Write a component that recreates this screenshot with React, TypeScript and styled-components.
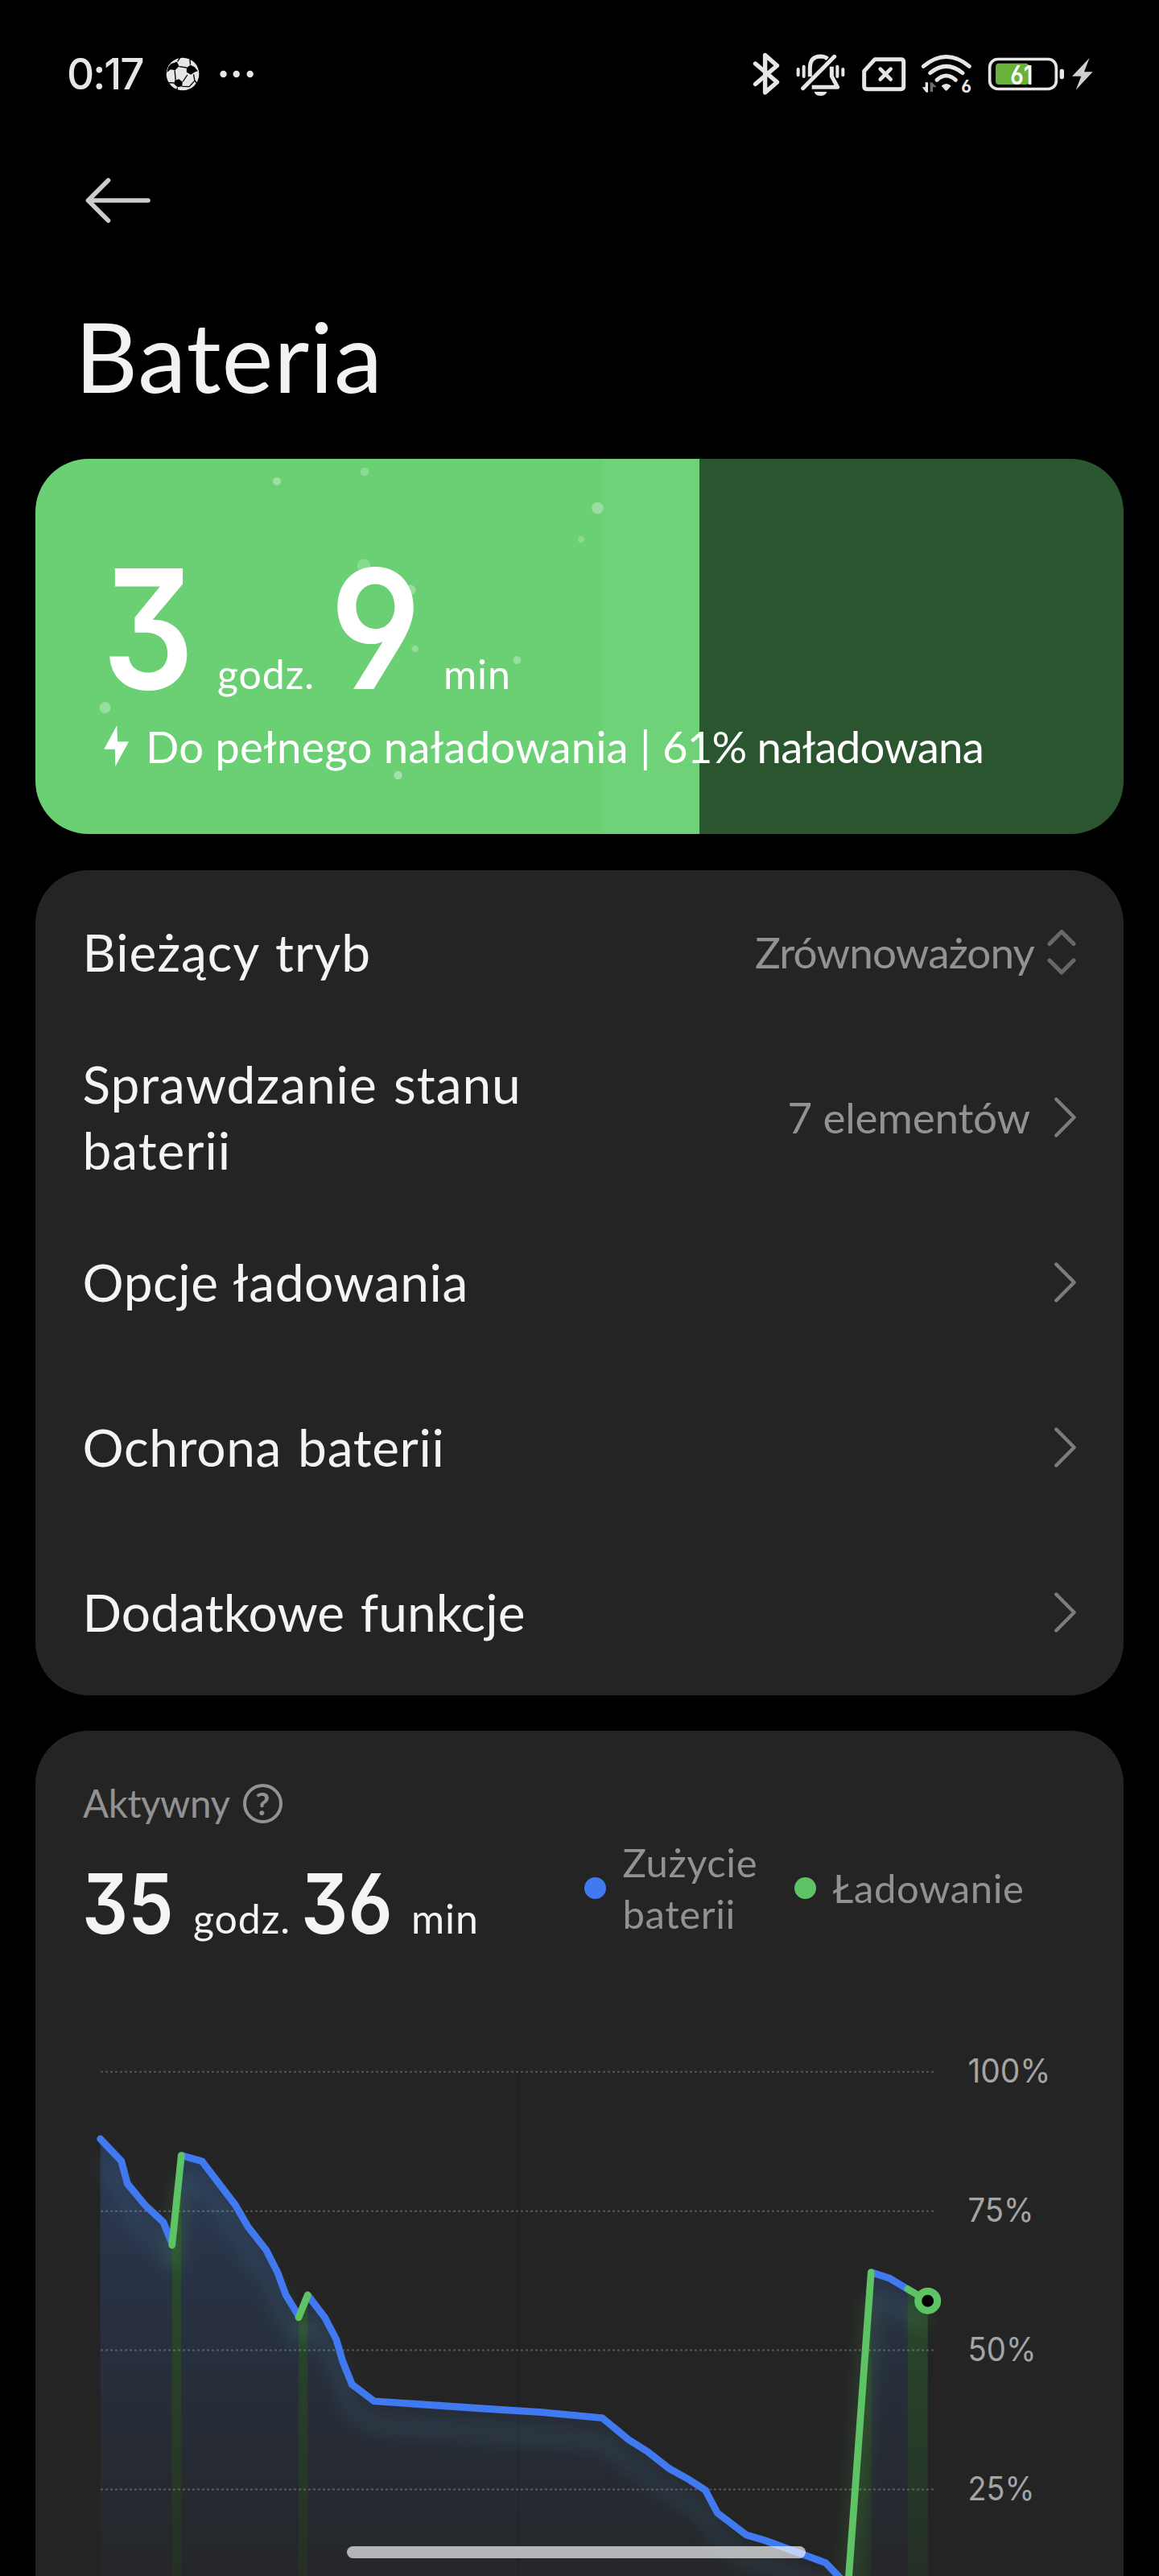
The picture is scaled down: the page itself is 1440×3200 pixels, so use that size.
import React from "react";
import styled, { createGlobalStyle } from "styled-components";

const GlobalStyle = createGlobalStyle`
  *, *::before, *::after { box-sizing: border-box; }
  html, body { margin: 0; padding: 0; background: #000; }
`;

const textFont = `Lato, "Noto Sans", sans-serif`;
const numberFont = `Inter, Roboto, sans-serif`;

const Screen = styled.main`
  position: relative;
  width: 1440px;
  height: 3200px;
  overflow: hidden;
  background: #000;
  color: #f4f4f4;
  font-family: ${textFont};
`;

/* ---------- status bar ---------- */

const StatusBar = styled.header`
  height: 184px;
  padding: 0 81px 0 83px;
  display: flex;
  align-items: center;
  justify-content: space-between;
`;

const StatusGroup = styled.div`
  display: flex;
  align-items: center;
`;

const Clock = styled.span`
  width: 122.5px;
  font-family: ${numberFont};
  font-size: 53px;
  line-height: 64px;
  font-weight: 500;
  letter-spacing: -2px;
  color: #e6e6e6;
`;

const StatusIcon = styled.svg<{ $gap?: number }>`
  display: block;
  flex: none;
  overflow: visible;
  margin-left: ${(p) => p.$gap ?? 0}px;
`;

const IconText = styled.text`
  font-family: ${numberFont};
  font-feature-settings: "ss01", "cv03";
`;

const ink = "#e6e6e6";

function BallIcon() {
  return (
    <StatusIcon width="42" height="42" viewBox="436.5 94 126 126">
      <circle cx="499.5" cy="157" r="61" fill={ink} />
      <g fill="#000">
        <path d="M456 119 L478 111 L486 128 L471 143 L454 140 L440 152 L446 131 Z" />
        <path d="M514 134 L528 123 L544 131 L556 146 L546 149 L530 159 L514 150 Z" />
        <path d="M470 181 L485 176 L499 186 L497 203 L480 206 L467 194 Z" />
      </g>
      <g fill="none" stroke="#000" strokeWidth="4">
        <path d="M486 129 L514 133 M470 143 L473 180 M500 185 L517 160 M480 110 L491 94 M528 122 L526 98 M540 158 L544 180 L552 192 M497 203 L524 204 L544 182 M438 189 L468 190 M480 207 L478 216" />
      </g>
    </StatusIcon>
  );
}

function MoreDots() {
  return (
    <StatusIcon $gap={25} width="44" height="12" viewBox="0 0 44 12">
      <g fill={ink}>
        <circle cx="4.5" cy="6" r="4.2" />
        <circle cx="20.7" cy="6" r="4.2" />
        <circle cx="37.7" cy="6" r="4.2" />
      </g>
    </StatusIcon>
  );
}

function BluetoothIcon() {
  return (
    <StatusIcon width="34" height="56" viewBox="935 64 34 56">
      <path
        d="M938.5 79 L965.5 102 L950.6 115 V68.5 L965.5 81.5 L938.5 104.5"
        fill="none"
        stroke={ink}
        strokeWidth="5.4"
        strokeLinecap="round"
        strokeLinejoin="round"
      />
    </StatusIcon>
  );
}

function MutedBellIcon() {
  return (
    <StatusIcon $gap={20} width="62" height="56" viewBox="267 72 186 168">
      <g fill="none" stroke={ink} strokeWidth="15" strokeLinecap="round">
        <path d="M293 209 L410 91" />
        <path d="M319 166 V131 Q320 91 358 90 Q374 90 385 99" strokeLinecap="butt" />
        <path d="M400 128 V164 L422 205 H326" strokeLinecap="butt" strokeLinejoin="round" />
      </g>
      <path d="M335 222 H382 Q378 237 358 237 Q339 237 335 222 Z" fill={ink} />
      <g stroke={ink} strokeWidth="12" strokeLinecap="round">
        <path d="M275 138 V160 M296 128 V165 M421 128 V165 M442 138 V160" />
      </g>
    </StatusIcon>
  );
}

function NoSimIcon() {
  return (
    <StatusIcon $gap={19} width="56" height="44" viewBox="510 96 168 132">
      <path
        d="M521 151 L561 107 H658 Q668 107 668 117 V208 Q668 218 658 218 H531 Q521 218 521 208 Z"
        fill="none"
        stroke={ink}
        strokeWidth="15"
        strokeLinejoin="round"
      />
      <path d="M581 143 L620 182 M620 143 L581 182" stroke={ink} strokeWidth="14" strokeLinecap="round" />
    </StatusIcon>
  );
}

function WifiIcon() {
  return (
    <StatusIcon $gap={18.3} width="64" height="50" viewBox="733 87 192 150">
      <g fill="none" stroke={ink} strokeWidth="15" strokeLinecap="round">
        <path d="M743 133 Q828 62 914 133" />
        <path d="M768 158 Q828 108 889 158" />
        <path d="M793 184 Q828 152 863 184" />
      </g>
      <path d="M810 206 Q828 190 846 206 L832 222 Q828 226 824 222 Z" fill={ink} />
      <path d="M750 193 H760 V230 H753 L738 211 H750 Z" fill={ink} />
      <path d="M768 228 V193 H775 L792 211 H778 V228 Z" fill="#6b6b6b" />
      <IconText x="884" y="231" fontSize="64" fontWeight="700" fill={ink} textLength="38" lengthAdjust="spacingAndGlyphs">
        6
      </IconText>
    </StatusIcon>
  );
}

function BatteryIcon() {
  return (
    <StatusIcon $gap={18.7} width="96" height="44" viewBox="981 90 288 132">
      <rect x="989" y="100.5" width="248" height="111" rx="30" fill="none" stroke={ink} strokeWidth="11" />
      <rect x="1011" y="116" width="124" height="79" rx="12" fill="#6ab13a" />
      <rect x="1250" y="137" width="16" height="38" rx="7" fill={ink} />
      <IconText x="1066" y="194" fontSize="98" fontWeight="600" fill="#fff" textLength="84" lengthAdjust="spacingAndGlyphs">
        61
      </IconText>
    </StatusIcon>
  );
}

function ChargeBolt() {
  return (
    <StatusIcon $gap={8} width="28" height="42" viewBox="1293 93 84 126">
      <path d="M1361 96 L1296 164 H1330 L1310 215 L1373 148 H1341 Z" fill="#cfcfcf" />
    </StatusIcon>
  );
}

/* ---------- page heading ---------- */

const NavBar = styled.nav`
  height: 129px;
  padding-left: 102px;
  display: flex;
  align-items: center;
`;

const Title = styled.h1`
  margin: 56px 0;
  padding-left: 93px;
  font-size: 121px;
  line-height: 145px;
  font-weight: 400;
  color: #f2f2f2;
  letter-spacing: 0.9px;
`;

/* ---------- cards ---------- */

const Stack = styled.div`
  display: flex;
  flex-direction: column;
  gap: 44.5px;
  padding: 0 44px;
`;

const Card = styled.section`
  border-radius: 66px;
  background: #242424;
  overflow: hidden;
`;

const ChargeCard = styled(Card)<{ $level: number }>`
  position: relative;
  height: 466px;
  padding: 111px 0 0 85px;
  color: #fff;
  background: linear-gradient(
    to right,
    #6bd073 0 705px,
    #70d278 705px ${(p) => p.$level}%,
    #2b552f ${(p) => p.$level}% 100%
  );
`;

const Bubbles = styled.svg`
  position: absolute;
  inset: 0;
`;

const TimeRow = styled.div<{ $height: number }>`
  position: relative;
  display: flex;
  align-items: baseline;
  height: ${(p) => p.$height}px;
  line-height: ${(p) => p.$height}px;
  margin-left: -2px;
`;

const Digits = styled.span<{ $size: number; $slot: number; $scale: number }>`
  flex: none;
  width: ${(p) => p.$slot}px;
  white-space: nowrap;
  font-family: ${numberFont};
  font-size: ${(p) => p.$size}px;
  font-weight: 600;
  font-feature-settings: "ss01", "cv09", "cv03", "cv04";
  transform: scaleX(${(p) => p.$scale});
  transform-origin: left center;
`;

const Unit = styled.span<{ $slot: number }>`
  flex: none;
  width: ${(p) => p.$slot}px;
  font-size: 50px;
  letter-spacing: 0.9px;
`;

const ChargeStatus = styled.p`
  position: relative;
  margin: 13px 0 0;
  display: flex;
  align-items: center;
  font-size: 54.5px;
  line-height: 66px;
  white-space: pre;
`;

const StatusPart = styled.span<{ $tracking: number }>`
  letter-spacing: ${(p) => p.$tracking}px;
`;

const StatusBolt = styled.svg`
  display: block;
  margin-right: 20px;
`;

/* ---------- settings list ---------- */

const Row = styled.div`
  height: 205px;
  padding: 0 58px 0 58.5px;
  display: flex;
  align-items: center;
  justify-content: space-between;
`;

const RowLabel = styled.span<{ $tracking: number }>`
  max-width: 620px;
  font-size: 64px;
  line-height: 82px;
  word-spacing: 3px;
  letter-spacing: ${(p) => p.$tracking}px;
`;

const RowEnd = styled.span<{ $gap: number; $tracking: number }>`
  display: flex;
  align-items: center;
  gap: ${(p) => p.$gap}px;
  font-size: 53px;
  line-height: 66px;
  letter-spacing: ${(p) => p.$tracking}px;
  color: #929292;
`;

function Chevron() {
  return (
    <svg width="28" height="52" viewBox="0 0 28 52">
      <path d="M2.3 3.5 L24.6 26 L2.3 48.5" fill="none" stroke="#7c7c7c" strokeWidth="4.4" strokeLinecap="round" strokeLinejoin="round" />
    </svg>
  );
}

function Selector() {
  return (
    <svg width="38" height="58" viewBox="0 0 38 58">
      <path
        d="M4 18.5 L19 3.5 L34 18.5 M4 39 L19 54 L34 39"
        fill="none"
        stroke="#686868"
        strokeWidth="5.2"
        strokeLinecap="round"
        strokeLinejoin="round"
      />
    </svg>
  );
}

const settings = [
  { label: "Bieżący tryb", value: "Zrównoważony", picker: true, tracking: 0.95, valueTracking: -0.85 },
  { label: "Sprawdzanie stanu baterii", value: "7 elementów", tracking: 0.97, valueTracking: -0.2 },
  { label: "Opcje ładowania", tracking: 0.57 },
  { label: "Ochrona baterii", tracking: 0.67 },
  { label: "Dodatkowe funkcje", tracking: 0.1 },
];

/* ---------- usage card ---------- */

const UsageCard = styled(Card)`
  height: 1120px;
`;

const UsageHeader = styled.div`
  height: 390px;
  padding: 0 60px;
  display: flex;
`;

const UsageSummary = styled.div`
  flex: 0 0 622px;
  padding-top: 60px;
`;

const ActiveLabel = styled.div`
  display: flex;
  align-items: center;
  gap: 16px;
  height: 60px;
  margin: 0 0 45px -1px;
  font-size: 47.5px;
  line-height: 60px;
  letter-spacing: -0.4px;
  color: #929292;
`;

const HelpBadge = styled.span`
  width: 49px;
  height: 49px;
  border: 4px solid #929292;
  border-radius: 50%;
  display: flex;
  align-items: center;
  justify-content: center;
  font-size: 39px;
  font-weight: 700;
  line-height: 1;
`;

const Legend = styled.div`
  display: flex;
  gap: 24px;
  padding-top: 131px;
`;

const LegendItem = styled.div`
  display: flex;
  align-items: center;
  gap: 20.5px;
  height: 128px;
`;

const LegendDot = styled.i<{ $color: string }>`
  flex: none;
  width: 27px;
  height: 27px;
  border-radius: 50%;
  background: ${(p) => p.$color};
`;

const LegendLabel = styled.span`
  width: 189.5px;
  font-size: 49px;
  line-height: 64px;
  letter-spacing: 0.6px;
  color: #929292;
`;

const ChartSvg = styled.svg`
  display: block;
`;

const AxisLabel = styled.text`
  font-family: ${numberFont};
  font-size: 41px;
  fill: #a5a5a5;
`;

const HomeIndicator = styled.div`
  position: absolute;
  left: 431px;
  bottom: 22px;
  width: 570px;
  height: 15px;
  border-radius: 8px;
  background: rgba(255, 255, 255, 0.66);
`;

type Point = [number, number];

const BLUE = "#4179f0";
const GREEN = "#5ec364";

const drains: Point[][] = [
  [[124.7, 2657], [150.7, 2684.4], [158.3, 2712.6], [180, 2739], [203, 2760.5], [213.7, 2787]],
  [[225.3, 2677.6], [251, 2684.8], [292.3, 2739], [308.3, 2766.4], [330.7, 2795], [345, 2823.2], [355, 2850.6], [371, 2877]],
  [
    [382.3, 2851], [403.7, 2879.2], [417.7, 2906], [426, 2934], [437.3, 2962], [464.7, 2982.8], [600, 2992],
    [673.3, 2996.7], [748.3, 3003.7], [781, 3030.7], [804, 3045], [831.7, 3066.7], [855.7, 3080], [876.3, 3093.3],
    [891.3, 3121.7], [927.3, 3149], [951.7, 3156.3], [1026, 3183.7], [1053, 3212],
  ],
  [[1082.3, 2822.8], [1105, 2830], [1127.7, 2843.5]],
];

const charges: Point[][] = [
  [[213.7, 2789], [225.3, 2677.6]],
  [[371, 2878.8], [382.3, 2851]],
  [[1053.5, 3215], [1082.3, 2822.8]],
  [[1127.7, 2843.5], [1152.7, 2858.2]],
];

const line = (pts: Point[]) => "M" + pts.map((p) => p.join(" ")).join(" L");
const area = (pts: Point[]) => `${line(pts)} L${pts[pts.length - 1][0]} 3260 L${pts[0][0]} 3260 Z`;

const gridLines = [
  { y: 2573.7, label: "100%", width: 101 },
  { y: 2746.7, label: "75%", width: 80 },
  { y: 2919.6, label: "50%", width: 83 },
  { y: 3092.6, label: "25%", width: 81 },
];

function BatteryChart() {
  return (
    <ChartSvg width="1352" height="660" viewBox="44 2540 1352 660">
      <defs>
        <linearGradient id="drain" gradientUnits="userSpaceOnUse" x1="0" y1="2650" x2="0" y2="3230">
          <stop offset="0" stopColor="#3a70d8" stopOpacity="0.28" />
          <stop offset="1" stopColor="#3a60a0" stopOpacity="0.03" />
        </linearGradient>
        <linearGradient id="charge" gradientUnits="userSpaceOnUse" x1="0" y1="2680" x2="0" y2="3260">
          <stop offset="0" stopColor="#2f7a35" stopOpacity="0.55" />
          <stop offset="1" stopColor="#2f7a35" stopOpacity="0.08" />
        </linearGradient>
        <filter id="glow" filterUnits="userSpaceOnUse" x="80" y="2600" width="1140" height="700">
          <feGaussianBlur stdDeviation="11" />
        </filter>
      </defs>

      <path d="M644 2573 V3200" stroke="#1f1f1f" strokeWidth="1.5" />
      {drains.map((pts, i) => (
        <path key={i} d={area(pts)} fill="url(#drain)" />
      ))}
      {charges.map((pts, i) => (
        <path key={i} d={area(pts)} fill="url(#charge)" />
      ))}

      <g transform="translate(0 30)" filter="url(#glow)" fill="none" strokeWidth="18" opacity="0.19">
        {drains.map((pts, i) => (
          <path key={i} d={line(pts)} stroke="#4a86a0" strokeLinejoin="round" />
        ))}
        {charges.map((pts, i) => (
          <path key={i} d={line(pts)} stroke={GREEN} strokeWidth="18" />
        ))}
      </g>

      {gridLines.map((g) => (
        <g key={g.label}>
          <path d={`M125 ${g.y} H1160`} stroke="#fff" strokeOpacity="0.23" strokeWidth="2" strokeDasharray="3 3" />
          <AxisLabel x="1202.5" y={g.y + 13.5} textLength={g.width + 2} lengthAdjust="spacingAndGlyphs">
            {g.label}
          </AxisLabel>
        </g>
      ))}

      <g fill="none" strokeWidth="8.8" strokeLinecap="round">
        {drains.map((pts, i) => (
          <path key={i} d={line(pts)} stroke={BLUE} />
        ))}
        {charges.map((pts, i) => (
          <path key={i} d={line(pts)} stroke={GREEN} />
        ))}
      </g>
      <circle cx="1152.7" cy="2858.2" r="12" fill="#000" stroke={GREEN} strokeWidth="9" />
    </ChartSvg>
  );
}

const bubbles: [number, number, number, number][] = [
  [300, 28, 5, 0.34],
  [409, 16, 5.2, 0.24],
  [698.5, 61, 7.3, 0.32],
  [678, 100, 4.2, 0.22],
  [408, 133, 8.5, 0.22],
  [466, 163, 6.5, 0.3],
  [471.7, 236, 4.3, 0.26],
  [598.4, 250, 5, 0.3],
  [86.5, 309, 7, 0.3],
  [450.5, 393, 5.2, 0.38],
];

export default function App() {
  return (
    <>
      <GlobalStyle />
      <Screen>
        <StatusBar>
          <StatusGroup>
            <Clock>0:17</Clock>
            <BallIcon />
            <MoreDots />
          </StatusGroup>
          <StatusGroup>
            <BluetoothIcon />
            <MutedBellIcon />
            <NoSimIcon />
            <WifiIcon />
            <BatteryIcon />
            <ChargeBolt />
          </StatusGroup>
        </StatusBar>

        <NavBar>
          <svg width="90" height="60" viewBox="102 218.5 90 60">
            <path
              d="M109.5 248.5 H184 M134.5 223.5 L109.5 248.5 L134.5 273.5"
              fill="none"
              stroke="#cccccc"
              strokeWidth="5.6"
              strokeLinecap="round"
              strokeLinejoin="round"
            />
          </svg>
        </NavBar>
        <Title>Bateria</Title>

        <Stack>
          <ChargeCard $level={61}>
            <Bubbles width="1352" height="466" viewBox="0 0 1352 466">
              {bubbles.map(([x, y, r, o]) => (
                <circle key={`${x}-${y}`} cx={x} cy={y} r={r} fill="#fff" fillOpacity={o} />
              ))}
            </Bubbles>
            <TimeRow $height={200}>
              <Digits $size={206} $slot={143} $scale={0.87}>3</Digits>
              <Unit $slot={140}>godz.</Unit>
              <Digits $size={206} $slot={141} $scale={0.91}>9</Digits>
              <Unit $slot={100}>min</Unit>
            </TimeRow>
            <ChargeStatus>
              <StatusBolt width="32" height="52" viewBox="129 902 32 52">
                <path d="M145.3 902 L129.2 931.7 H142.8 L143.3 953 L160 922.3 H146 Z" fill="#fff" />
              </StatusBolt>
              <StatusPart $tracking={0.15}>{"Do pełnego naładowania | "}</StatusPart>
              <StatusPart $tracking={-0.8}>61% naładowana</StatusPart>
            </ChargeStatus>
          </ChargeCard>

          <Card>
            {settings.map((s) => (
              <Row key={s.label}>
                <RowLabel $tracking={s.tracking}>{s.label}</RowLabel>
                <RowEnd $gap={s.picker ? 15 : 30} $tracking={s.valueTracking ?? 0}>
                  {s.value}
                  {s.picker ? <Selector /> : <Chevron />}
                </RowEnd>
              </Row>
            ))}
          </Card>

          <UsageCard>
            <UsageHeader>
              <UsageSummary>
                <ActiveLabel>
                  Aktywny <HelpBadge>?</HelpBadge>
                </ActiveLabel>
                <TimeRow $height={100}>
                  <Digits $size={103} $slot={138} $scale={0.87}>35</Digits>
                  <Unit $slot={134}>godz.</Unit>
                  <Digits $size={103} $slot={137} $scale={0.89}>36</Digits>
                  <Unit $slot={100}>min</Unit>
                </TimeRow>
              </UsageSummary>
              <Legend>
                <LegendItem>
                  <LegendDot $color={BLUE} />
                  <LegendLabel>Zużycie baterii</LegendLabel>
                </LegendItem>
                <LegendItem>
                  <LegendDot $color={GREEN} />
                  <LegendLabel>Ładowanie</LegendLabel>
                </LegendItem>
              </Legend>
            </UsageHeader>
            <BatteryChart />
          </UsageCard>
        </Stack>

        <HomeIndicator />
      </Screen>
    </>
  );
}
